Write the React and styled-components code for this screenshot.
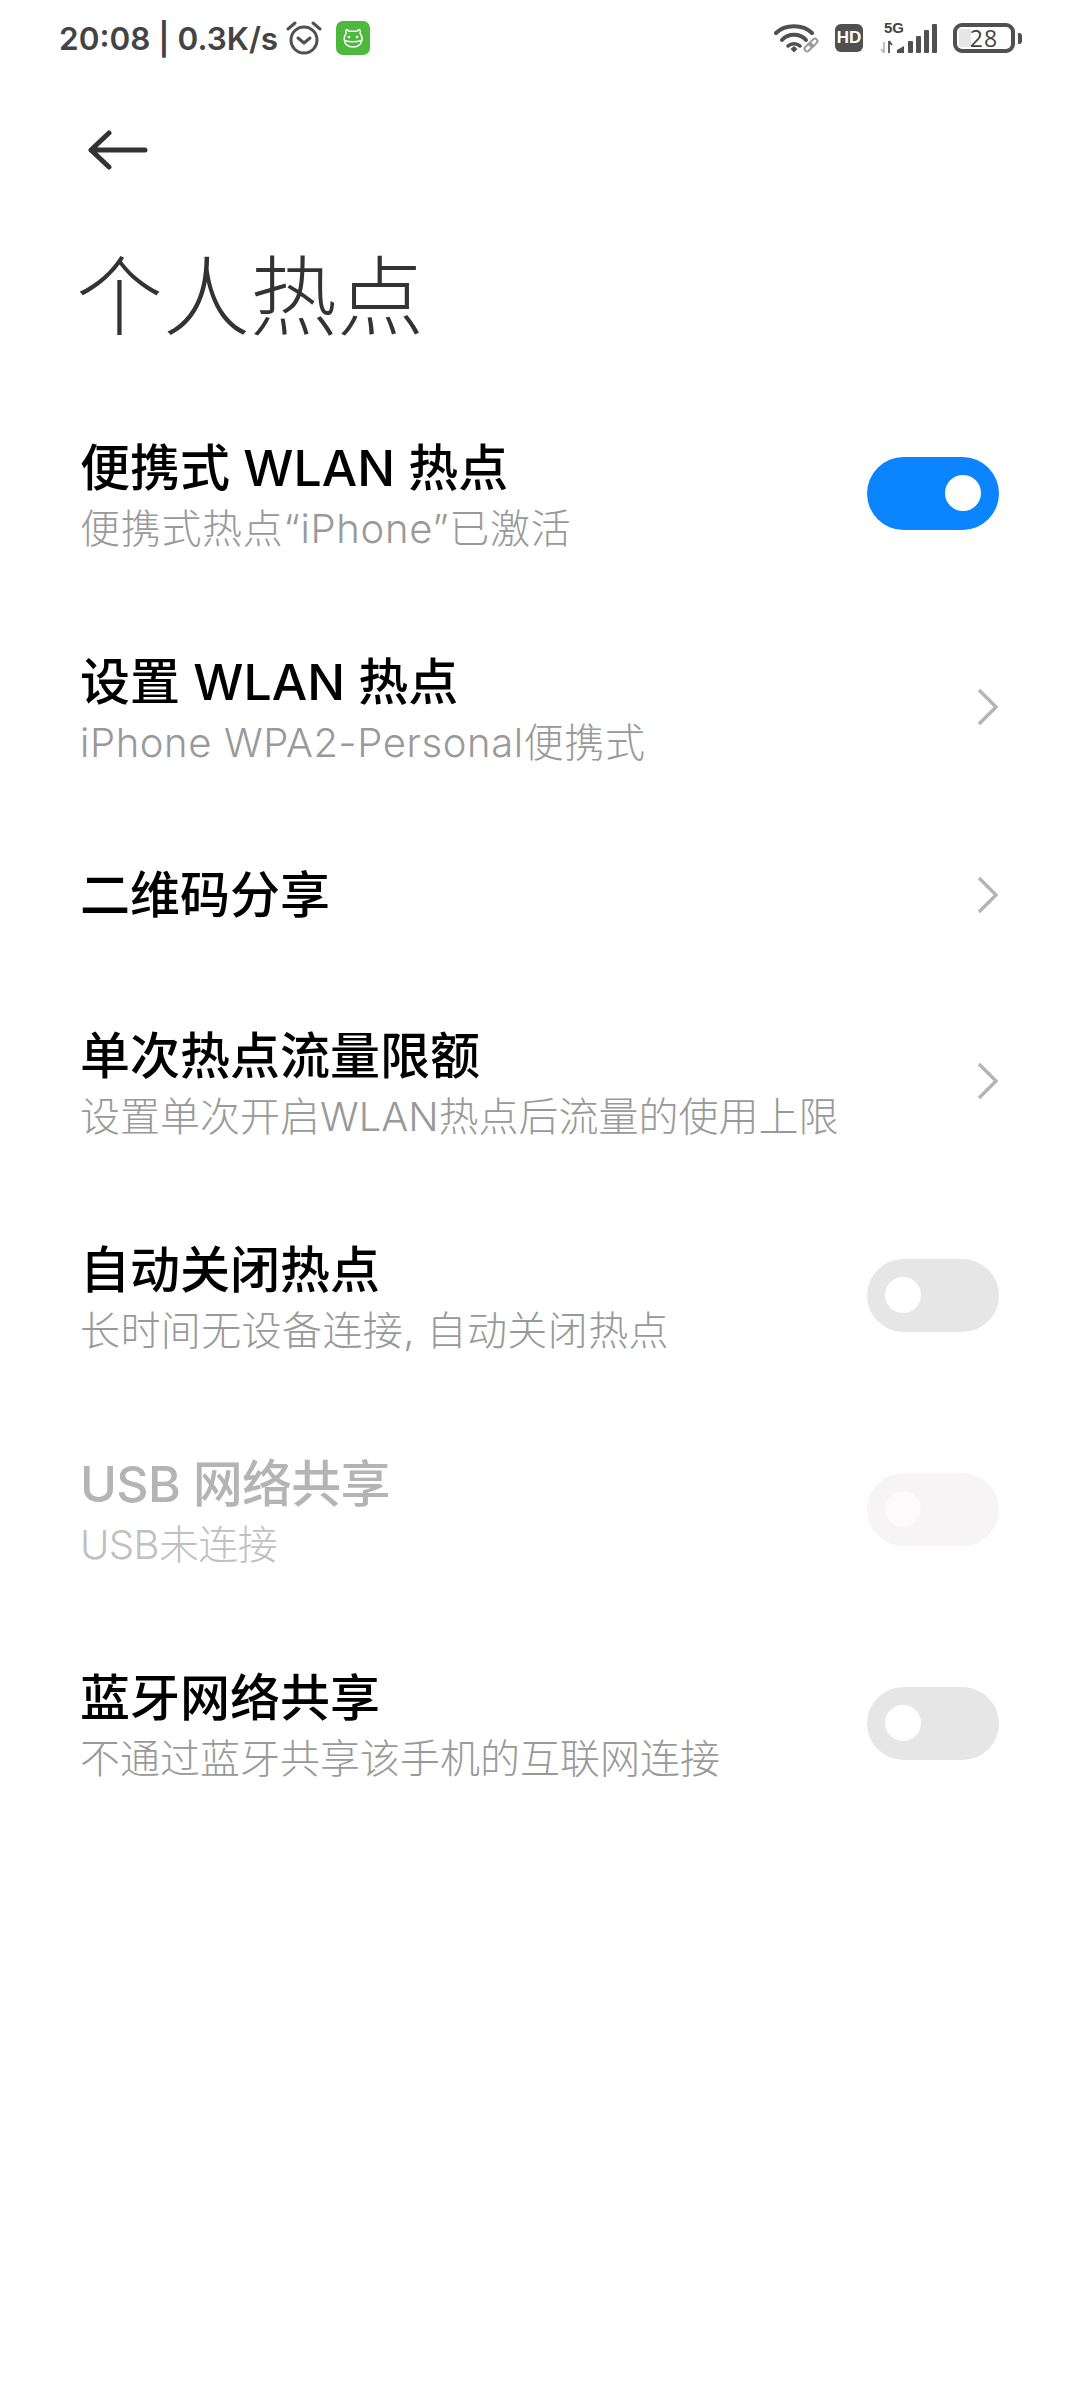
import React from 'react';
import styled, { createGlobalStyle } from 'styled-components';

const GlobalStyle = createGlobalStyle`
  html, body {
    background: #fff;
    margin: 0;
    padding: 0;
  }

  body {
    font-family: Inter, 'Noto Sans CJK SC', sans-serif;
  }
`;

const Page = styled.div`
  background: #fff;
  min-height: 2400px;
  width: 1080px;
`;

const StatusBar = styled.div`
  align-items: center;
  display: flex;
  height: 76px;
  justify-content: space-between;
  padding: 0 58px 0 59px;
`;

const StatusGroup = styled.div`
  align-items: center;
  display: flex;
`;

const Clock = styled.span`
  color: #444;
  font-family: Inter, sans-serif;
  font-size: 31.5px;
  font-weight: 600;
  white-space: nowrap;
`;

const HdBadge = styled.span`
  align-items: center;
  background: #505050;
  border-radius: 6px;
  color: #fff;
  display: flex;
  font-family: 'Liberation Sans', sans-serif;
  font-size: 17px;
  font-weight: 700;
  height: 28px;
  justify-content: center;
  margin: 0 16px 0 15px;
  width: 28px;
`;

const SignalBox = styled.div`
  height: 32px;
  position: relative;
  width: 58px;
`;

const FiveG = styled.span`
  color: #444;
  font-family: 'Liberation Sans', sans-serif;
  font-size: 15px;
  font-weight: 700;
  left: 5px;
  line-height: 15px;
  position: absolute;
  top: -2px;
`;

const Battery = styled.div`
  align-items: center;
  border: 4px solid #505050;
  border-radius: 9px;
  box-sizing: border-box;
  color: #444;
  display: flex;
  font-family: 'Open Sans', sans-serif;
  font-size: 23px;
  height: 30px;
  justify-content: center;
  margin-left: 16px;
  position: relative;
  width: 62px;
`;

const BatteryFill = styled.span`
  background: #e6e6e6;
  bottom: 2px;
  left: 2px;
  position: absolute;
  top: 2px;
  width: 12px;
`;

const BatteryLevel = styled.span`
  letter-spacing: 1px;
  line-height: 1;
  position: relative;
`;

const BatteryCap = styled.span`
  background: #505050;
  border-radius: 0 3px 3px 0;
  height: 11px;
  margin-left: 3px;
  width: 4px;
`;

const Header = styled.header`
  padding: 54px 88px 0;
`;

const Title = styled.h1`
  color: #333;
  font-size: 87px;
  font-weight: 300;
  line-height: 120px;
  margin: 68px 0 0 -12px;
`;

const List = styled.div`
  padding-top: 28px;
`;

const Row = styled.div`
  align-items: center;
  display: flex;
  justify-content: space-between;
  padding: ${props => (props.$single ? '51px 81px 49px 80px' : '41px 81px 41px 80px')};
`;

const RowText = styled.div`
  padding-top: ${props => (props.$single ? 0 : '11px')};
`;

const RowTitle = styled.div`
  color: ${props => (props.$disabled ? '#b4b4b4' : '#000')};
  font-size: 50px;
  font-weight: 500;
  letter-spacing: ${props => props.$spacing || 0}px;
  line-height: 60px;
  white-space: pre;
`;

const RowSub = styled.div`
  color: ${props => (props.$disabled ? '#c0c0c0' : '#999')};
  font-size: 40px;
  font-weight: 300;
  letter-spacing: ${props => props.$spacing || 0}px;
  line-height: 61px;
  white-space: pre;
`;

const SwitchTrack = styled.div`
  align-items: center;
  background: ${props => props.$color};
  border-radius: 37px;
  display: flex;
  flex: none;
  height: 73px;
  justify-content: ${props => (props.$on ? 'flex-end' : 'flex-start')};
  padding: 0 18px;
  width: 96px;
`;

const SwitchKnob = styled.span`
  background: ${props => (props.$disabled ? '#fdfafc' : '#fff')};
  border-radius: 50%;
  height: 36px;
  width: 36px;
`;

const ChevronWrap = styled.div`
  display: flex;
  flex: none;
  margin-right: 1px;
`;

const AlarmIcon = () => (
  <svg width="36" height="36" viewBox="0 0 36 36" fill="none" stroke="#505050" style={{ marginLeft: 8 }}>
    <circle cx="18" cy="20" r="13" strokeWidth="3" />
    <path d="M12 18l6 5 6-5" strokeWidth="3" strokeLinecap="round" strokeLinejoin="round" />
    <path d="M2 9l7-6M34 9l-7-6" strokeWidth="3" strokeLinecap="round" />
  </svg>
);

const GreenAppIcon = () => (
  <svg width="34" height="34" viewBox="0 0 34 34" style={{ marginLeft: 14 }}>
    <rect width="34" height="34" rx="7" fill="#4cb83c" />
    <path d="M10.500 8.500c1 0 1.800.8 2.200 1.700h8.600c.4-.9 1.200-1.700 2.200-1.700 1 .8 1 2.500.6 4 1.300 1.500 2 3.500 1.900 5.500-.2 5-3.700 8-8.900 8s-8.700-3-8.900-8c-.1-2 .6-4 1.900-5.500-.4-1.500-.4-3.200.4-4z" fill="none" stroke="#fff" strokeWidth="1.500" strokeLinejoin="round" />
    <path d="M8.500 19.500c5 1.500 12 1.500 17 0" fill="none" stroke="#fff" strokeWidth="1.500" />
    <circle cx="13" cy="16" r="1.300" fill="#fff" />
    <circle cx="21" cy="16" r="1.300" fill="#fff" />
  </svg>
);

const WifiIcon = () => (
  <svg width="46" height="32" viewBox="0 0 46 32" fill="none">
    <path d="M2 11C11 2 29 2 38 11" stroke="#505050" strokeWidth="4" strokeLinecap="round" />
    <path d="M8 18C14 11 26 11 32 18" stroke="#505050" strokeWidth="4" strokeLinecap="round" />
    <path d="M14 24c3-3 9-3 12 0" stroke="#505050" strokeWidth="3.500" strokeLinecap="round" />
    <path d="M16.500 27l3.500-3 3.500 3-3.500 3.500z" fill="#505050" />
    <g stroke="#999" strokeWidth="2" transform="rotate(-45 37 23)">
      <rect x="29" y="20.500" width="9" height="5" rx="2.500" />
      <rect x="36" y="20.500" width="9" height="5" rx="2.500" />
    </g>
  </svg>
);

const SignalIcon = () => (
  <SignalBox>
    <FiveG>5G</FiveG>
    <svg width="58" height="32" viewBox="0 0 58 32" fill="#505050">
      <path d="M5 31V20M5 31l-3-4" stroke="#bbb" strokeWidth="1.800" fill="none" />
      <path d="M10 31V19M10 19l3 4" stroke="#505050" strokeWidth="1.800" fill="none" />
      <path d="M18 31v-3l7-4v7z" />
      <rect x="29" y="19" width="5" height="12" rx="1" />
      <rect x="37" y="14" width="5" height="17" rx="1" />
      <rect x="45" y="8" width="5" height="23" rx="1" />
      <rect x="53" y="2" width="5" height="29" rx="1" />
    </svg>
  </SignalBox>
);

const BackArrow = () => (
  <svg width="60" height="40" viewBox="0 0 60 40" fill="none" stroke="#333" strokeWidth="5" strokeLinecap="round" strokeLinejoin="round" style={{ display: 'block' }}>
    <path d="M3 20h54M21 3L3 20l18 17" />
  </svg>
);

const Chevron = () => (
  <ChevronWrap>
    <svg width="21" height="38" viewBox="0 0 21 38" fill="none" stroke="#b5b5b5" strokeWidth="3.500">
      <path d="M2 2l17 17L2 36" />
    </svg>
  </ChevronWrap>
);

const trackColors = { on: '#0a84ff', off: '#e6e6e6', disabled: '#f7f4f6' };

const Toggle = ({ state }) => (
  <SwitchTrack $color={trackColors[state]} $on={state === 'on'}>
    <SwitchKnob $disabled={state === 'disabled'} />
  </SwitchTrack>
);

const rows = [
  { title: '便携式 WLAN 热点', sub: '便携式热点“iPhone”已激活', subSpacing: 0.7, toggle: 'on' },
  { title: '设置 WLAN 热点', sub: 'iPhone WPA2-Personal便携式', subSpacing: 0.6 },
  { title: '二维码分享' },
  { title: '单次热点流量限额', sub: '设置单次开启WLAN热点后流量的使用上限' },
  { title: '自动关闭热点', sub: '长时间无设备连接, 自动关闭热点', subSpacing: 0.4, toggle: 'off' },
  { title: 'USB 网络共享', titleSpacing: -0.7, sub: 'USB未连接', subSpacing: -0.6, toggle: 'disabled' },
  { title: '蓝牙网络共享', sub: '不通过蓝牙共享该手机的互联网连接', toggle: 'off' },
];

export default function App() {
  return (
    <Page>
      <GlobalStyle />
      <StatusBar>
        <StatusGroup>
          <Clock>20:08 | 0.3K/s</Clock>
          <AlarmIcon />
          <GreenAppIcon />
        </StatusGroup>
        <StatusGroup>
          <WifiIcon />
          <HdBadge>HD</HdBadge>
          <SignalIcon />
          <Battery>
            <BatteryFill />
            <BatteryLevel>28</BatteryLevel>
          </Battery>
          <BatteryCap />
        </StatusGroup>
      </StatusBar>
      <Header>
        <BackArrow />
        <Title>个人热点</Title>
      </Header>
      <List>
        {rows.map(row => {
          const disabled = row.toggle === 'disabled';
          return (
            <Row key={row.title} $single={!row.sub}>
              <RowText $single={!row.sub}>
                <RowTitle $disabled={disabled} $spacing={row.titleSpacing}>{row.title}</RowTitle>
                {row.sub && <RowSub $disabled={disabled} $spacing={row.subSpacing}>{row.sub}</RowSub>}
              </RowText>
              {row.toggle ? <Toggle state={row.toggle} /> : <Chevron />}
            </Row>
          );
        })}
      </List>
    </Page>
  );
}
